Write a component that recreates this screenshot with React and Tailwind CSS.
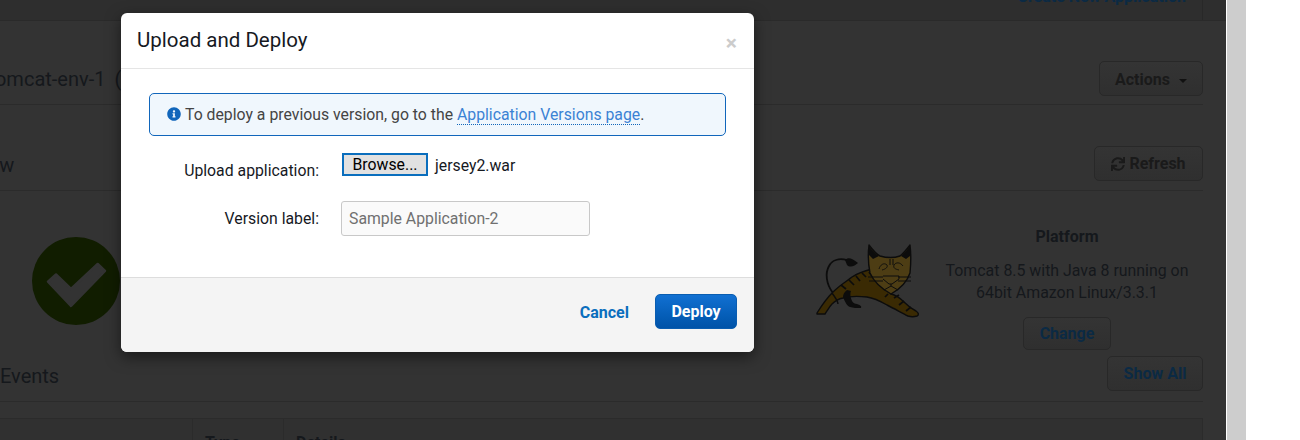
import React from "react";
import { FaInfoCircle, FaSync } from "react-icons/fa";

const font = { fontFamily: "Roboto, sans-serif" };

function Tomcat() {
  const ink = "#0c0c0c";
  return (
    <svg width="130" height="90" viewBox="0 0 130 90" className="shrink-0">
      {/* tail */}
      <path d="M33 58 C26 49 25 38 29 31 C32 25 39 23 47 25" fill="none" stroke={ink} strokeWidth="1.8" />
      <path d="M45 25 C48 22 52 23 58 28 C55 31 50 33 47 30 Z" fill={ink} />
      {/* body */}
      <path d="M17 78 C22 70 27 63 33 57 C40 50 47 46 52 42 C58 38 64 36 72 34 L91 59 C96 60 100 63 104 67 C108 71 112 74 116 76 C119 78 119 80 117 81 C114 82 111 82 108 81 C102 78 95 74 87 70 C80 66 74 63 67 62 C58 61 50 61 43 63 C38 64 35 66 32 69 C29 72 27 76 25 79 L17 79 Z" fill="#3a2a03" stroke={ink} strokeWidth="1.4" strokeLinejoin="round" />
      {/* hind leg */}
      <path d="M43 62 C45 67 47 71 50 72 C53 73 57 73 61 73 C62 71 60 70 57 69 C55 69 53 68 52 66 C50 62 50 58 51 56 L47 55 C44 57 43 60 43 62 Z" fill={ink} />
      <path d="M32 58 C35 62 38 66 38 69" fill="none" stroke={ink} strokeWidth="1.4" />
      {/* stripes */}
      <path d="M41 50 L46 54 M49 45 L54 50 M56 41 L60 46 M62 38 L66 42 M69 37 L72 41 M94 63 L99 60 M99 70 L104 66 M106 76 L111 72 M85 62 L88 59" stroke={ink} strokeWidth="1.7" fill="none" />
      {/* head */}
      <path d="M69 10 C72 14 76 19 80 21 C87 23 94 23 100 21 C104 18 107 14 110 10 C111 18 111 28 110 38 C107 47 100 54 91 59 C82 54 74 47 70 38 C68 28 68 18 69 10 Z" fill="#4d3d14" stroke={ink} strokeWidth="1.4" strokeLinejoin="round" />
      <path d="M69 11 C72 15 76 19 79 21 L73 24 L69 20 Z M110 11 C107 15 104 18 101 21 L106 24 L110 21 Z" fill={ink} />
      {/* face */}
      <path d="M79 34 C80 30 84 27 87 30 C88 32 86 34 82 35 M103 31 C100 27 96 27 94 30 C93 33 95 34 99 35" fill="none" stroke={ink} strokeWidth="0.9" />
      <path d="M83 41 L99 41 L99 44 L92 49 L89 49 L83 44" fill="none" stroke={ink} strokeWidth="1" />
      <path d="M90 24 L90 30 M93 24 L93 30 M91 49 L91 51 M84 55 L91 51 L98 55" fill="none" stroke={ink} strokeWidth="1" />
      <path d="M68 42 L83 42 M69 46 L83 46 M98 42 L111 42 M98 46 L111 46" fill="none" stroke={ink} strokeWidth="1" />
    </svg>
  );
}

function GhostButton({ className = "", children }) {
  return (
    <div className={"flex items-center justify-center gap-1 rounded-[5px] border border-[#282828] bg-gradient-to-b from-[#343434] to-[#2f2f2f] text-[16px] font-bold " + className}>
      {children}
    </div>
  );
}

function Background() {
  return (
    <div className="w-[1226px] h-[440px] shrink-0 overflow-hidden bg-[#333333] text-[#15181c]">
      <div className="h-[21px] bg-[#2e2e2e] border-b border-[#2a2a2a] pr-[23px] flex justify-end">
        <div className="w-[216px] h-full border-r border-[#282828] overflow-hidden flex justify-end pr-[16px]">
          <span className="text-[16px] font-bold text-[#0b2a44] leading-[18px] h-[18px] -mt-[12px] whitespace-nowrap">Create New Application</span>
        </div>
      </div>
      <div className="pr-[23px]">
        <div className="h-[84px] border-b border-[#2b2b2b] flex items-end justify-between pb-2">
          <div className="text-[20px] -ml-[16px] pb-1 leading-[26px] whitespace-nowrap">Tomcat-env-1 <span className="ml-1">(</span></div>
          <GhostButton className="w-[104px] h-[35px] text-[#1a1a1a] gap-[9px] pt-[2px]">
            Actions
            <span className="mt-0.5 w-0 h-0 border-x-[4px] border-x-transparent border-t-[4px] border-t-[#111]" />
          </GhostButton>
        </div>
        <div className="h-[86px] border-b border-[#2b2b2b] flex items-end justify-between pb-[9px]">
          <div className="text-[20px] -ml-[29px] pb-[3px] leading-[26px]">View</div>
          <GhostButton className="w-[109px] h-[35px] text-[#1a1a1a]">
            <FaSync className="text-[14px]" />
            Refresh
          </GhostButton>
        </div>
        <div className="h-[165px] flex justify-between items-start">
          <svg width="88" height="88" viewBox="0 0 88 88" className="ml-[32px] mt-[46px] shrink-0">
            <circle cx="44" cy="44" r="44" fill="#111d00" />
            <path d="M16 44.7 L24 37.5 L39 52 L65.7 27 L73 34 L39 69 Z" fill="#333333" stroke="#333333" strokeWidth="2.5" strokeLinejoin="round" />
          </svg>
          <div className="flex items-start">
            <div className="mt-[44px] mr-px"><Tomcat /></div>
            <div className="w-[272px] flex flex-col items-center text-center mt-[36px]">
              <div className="text-[16px] font-bold leading-[20px]">Platform</div>
              <div className="text-[15.9px] leading-[22px] mt-[13px]">Tomcat 8.5 with Java 8 running on<br />64bit Amazon Linux/3.3.1</div>
              <GhostButton className="w-[88px] h-[33px] mt-[13px] pt-px text-[#0b2a44]">Change</GhostButton>
            </div>
          </div>
        </div>
        <div className="h-[46px] border-b border-[#2b2b2b] flex items-start justify-between">
          <div className="text-[20px] mt-[7px] leading-[26px]">Events</div>
          <GhostButton className="w-[96px] h-[35px] text-[#0b2a44]">Show All</GhostButton>
        </div>
        <div className="mt-4 h-[40px] border border-[#2b2b2b] bg-[#303030] border-l-0 flex text-[16px] font-bold">
          <div className="w-[193px] border-r border-[#2b2b2b]" />
          <div className="w-[91px] border-r border-[#2b2b2b] pl-3 pt-[12px]">Type</div>
          <div className="pl-3 pt-[12px]">Details</div>
        </div>
      </div>
    </div>
  );
}

function Modal() {
  return (
    <div className="absolute left-[121px] top-[13px] w-[633px] h-[339px] bg-white rounded-[6px] overflow-hidden flex flex-col shadow-[0_5px_15px_rgba(0,0,0,0.5)]">
      <div className="h-[56px] shrink-0 border-b border-[#e5e5e5] pl-4 pr-4 flex justify-between">
        <div className="text-[20.5px] leading-[26px] pt-[14px] text-[#16191f]">Upload and Deploy</div>
        <div className="text-[21px] font-bold text-[#cccccc] leading-none pt-[20px] mr-[1px]">×</div>
      </div>
      <div className="flex-1 pt-6 pl-7 pr-7">
        <div className="h-[43px] border border-[#1166bb] bg-[#f0f7fd] rounded-[5px] flex items-center pl-[18px] text-[15.8px] text-[#444444] pt-[1px]">
          <FaInfoCircle className="text-[#1166bb] text-[14px] mr-[4px] -mt-[2px] -ml-px shrink-0" />
          <span>To deploy a previous version, go to the{" "}
            <span className="text-[#3b82d4] border-b border-dotted border-[#1166bb]">Application Versions page</span>.
          </span>
        </div>
        <div className="flex mt-[17px]">
          <div className="w-[170px] text-right text-[15.8px] text-[#16191f] pt-[8px] leading-[20px] shrink-0">Upload application:</div>
          <div className="ml-[23px] flex items-start text-[15.8px]">
            <div className="w-[86px] h-[23px] border-2 border-[#0a6ebd] bg-[#e1e1e1] text-black flex items-center justify-center leading-none">Browse...</div>
            <span className="ml-[7px] text-[#16191f] leading-[23px] pt-[1px]">jersey2.war</span>
          </div>
        </div>
        <div className="flex mt-[20px]">
          <div className="w-[170px] text-right text-[15.8px] text-[#16191f] leading-[35px] shrink-0">Version label:</div>
          <div className="ml-[22px] w-[249px] h-[35px] border border-[#c8c8c8] rounded-[3px] bg-[#fafafa] text-[15.8px] text-[#707070] leading-[33px] pl-[7px]">Sample Application-2</div>
        </div>
      </div>
      <div className="h-[75px] shrink-0 border-t border-[#dddddd] bg-[#f4f4f4] flex items-start justify-end pt-[16px] pr-[17px] gap-[26px]">
        <span className="text-[16px] font-bold text-[#0a6ebd] leading-[37px]">Cancel</span>
        <div className="w-[82px] h-[35px] rounded-[5px] border border-[#0a5db0] bg-gradient-to-b from-[#1170d2] to-[#0053a8] text-white text-[16px] font-bold flex items-center justify-center pt-px">Deploy</div>
      </div>
    </div>
  );
}

export default function App() {
  return (
    <div className="relative w-[1300px] h-[440px] overflow-hidden bg-white flex" style={font}>
      <Background />
      <div className="w-px bg-white shrink-0" />
      <div className="w-[19px] bg-[#cdcdcd] shrink-0" />
      <Modal />
    </div>
  );
}
